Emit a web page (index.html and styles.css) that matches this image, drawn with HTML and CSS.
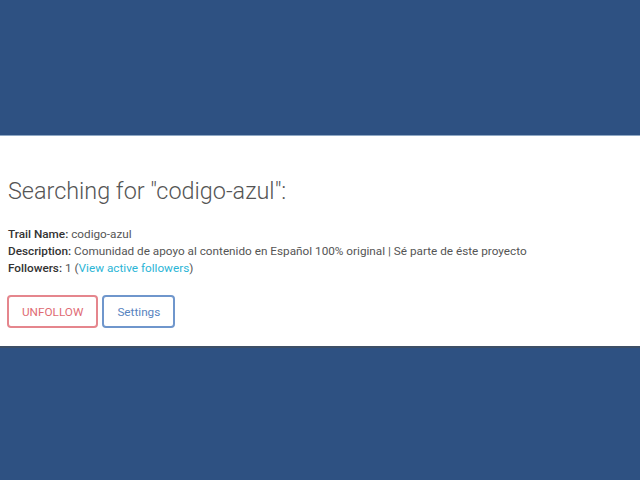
FILE: index.html
```html
<!DOCTYPE html>
<html lang="en">
<head>
    <meta charset="UTF-8">
    <meta name="viewport" content="width=device-width, initial-scale=1.0">
    <title>Trail search</title>
    <link rel="stylesheet" href="styles.css">
</head>
<body>
    <div class="band top"></div>

    <div class="panel">
        <h1>Searching for "codigo-azul":</h1>
        <div class="info">
            <p><b>Trail Name:</b> codigo-azul</p>
            <p><b>Description:</b> Comunidad de apoyo al contenido en Español 100% original | Sé parte de éste proyecto</p>
            <p><b>Followers:</b> 1 (<a href="#">View active followers</a>)</p>
        </div>
        <div class="actions">
            <button class="btn btn-unfollow">UNFOLLOW</button>
            <button class="btn btn-settings">Settings</button>
        </div>
    </div>

    <div class="band bottom"></div>
</body>
</html>
```

FILE: styles.css
```css
body {
    font-family: Roboto, "Liberation Sans", sans-serif;
    margin: 0;
    padding: 0;
    background-color: #2e5182;
    height: 480px;
    display: flex;
    flex-direction: column;
}

.band.top {
    height: 135px;
    border-bottom: 1px solid #8fa8c4;
}

.band.bottom {
    flex: 1;
    border-top: 2px solid #3d4f66;
}

.panel {
    background-color: #fff;
    height: 210px;
    padding: 0 7px;
    box-sizing: border-box;
}

h1 {
    font-weight: 300;
    font-size: 23.4px;
    color: #555;
    margin: 41px 0 0 1px;
    line-height: 28px;
}

.info {
    margin-top: 21px;
    margin-left: 1px;
    font-size: 11.75px;
    color: #555;
}

.info p {
    margin: 0;
    line-height: 17px;
}

.info b {
    font-weight: 500;
    color: #333;
}

.info a {
    color: #2bb5d6;
    text-decoration: none;
}

.actions {
    display: flex;
    gap: 4px;
    margin-top: 18px;
}

.btn {
    font-family: Roboto, "Liberation Sans", sans-serif;
    font-size: 11.75px;
    background: #fff;
    border-radius: 4px;
    border: 2px solid;
    height: 33px;
    padding: 0 13px;
}

.btn-unfollow {
    color: #e06b74;
    border-color: #e5868d;
}

.btn-settings {
    color: #5784c0;
    border-color: #6f96cc;
}
```
